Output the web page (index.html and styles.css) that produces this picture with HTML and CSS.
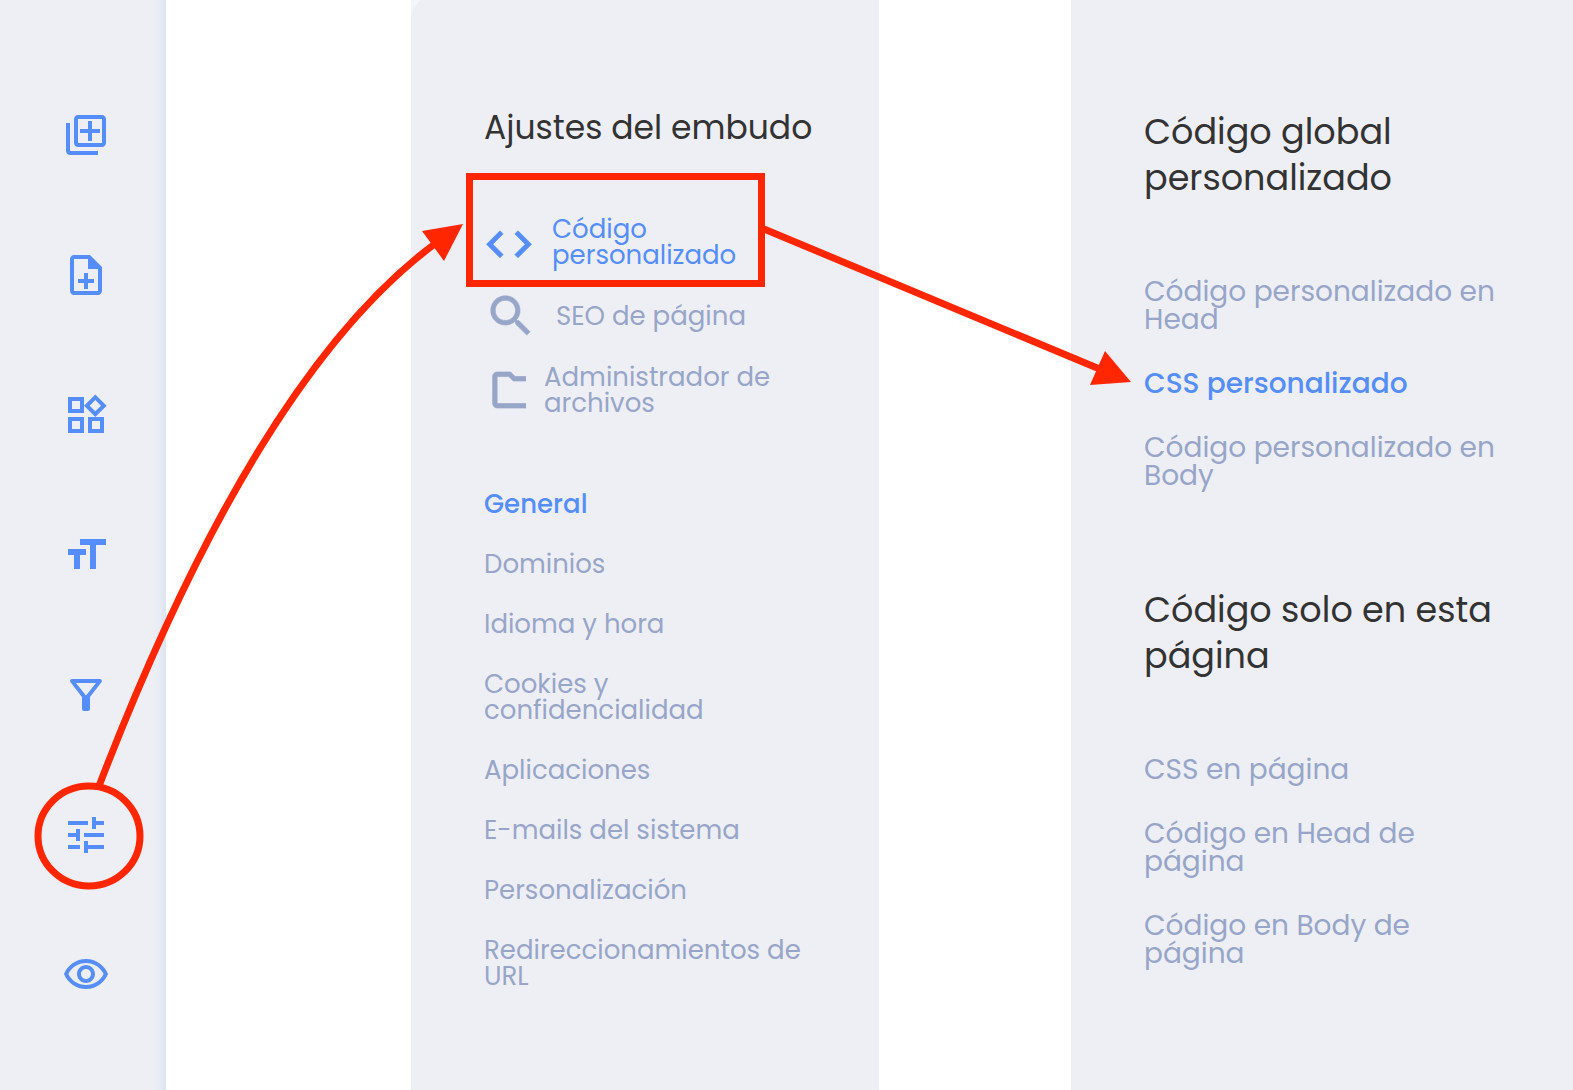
FILE: index.html
```html
<!DOCTYPE html>
<html lang="es">

<head>
  <meta charset="UTF-8" />
  <meta name="viewport" content="width=device-width, initial-scale=1.0" />
  <title>Ajustes del embudo</title>
  <link rel="stylesheet" href="styles.css">
</head>

<body>
  <div class="editor">
    <nav class="toolbar" aria-label="Herramientas">
      <button class="tool" aria-label="Añadir sección">
        <svg viewBox="0 0 24 24"><path d="M4 6H2v14c0 1.1.9 2 2 2h14v-2H4V6zm16-4H8c-1.1 0-2 .9-2 2v12c0 1.1.9 2 2 2h12c1.1 0 2-.9 2-2V4c0-1.1-.9-2-2-2zm0 14H8V4h12v12zm-7-1h2v-4h4V9h-4V5h-2v4H9v2h4v4z"/></svg>
      </button>
      <button class="tool" aria-label="Añadir página">
        <svg viewBox="0 0 24 24"><path d="M14 2H6c-1.1 0-2 .9-2 2v16c0 1.1.9 2 2 2h12c1.1 0 2-.9 2-2V8l-6-6zm4 18H6V4h7v5h5v11zm-5-9h-2v3H8v2h3v3h2v-3h3v-2h-3v-3z"/></svg>
      </button>
      <button class="tool" aria-label="Elementos">
        <svg viewBox="0 0 24 24"><path d="M16.66 4.52l2.83 2.83-2.83 2.83-2.83-2.83 2.83-2.83M9 5v4H5V5h4m10 10v4h-4v-4h4M9 15v4H5v-4h4m7.66-13.31L11 7.34 16.66 13l5.66-5.66-5.66-5.65zM11 3H3v8h8V3zm10 10h-8v8h8v-8zm-10 0H3v8h8v-8z"/></svg>
      </button>
      <button class="tool" aria-label="Tipografía">
        <svg viewBox="0 0 24 24"><path d="M9 4v3h5v12h3V7h5V4H9zm-6 8h3v7h3v-7h3V9H3v3z"/></svg>
      </button>
      <button class="tool" aria-label="Embudo">
        <svg viewBox="0 0 24 24"><path d="M7 6h10l-5.01 6.3L7 6zm-2.75-.39C6.27 8.2 10 13 10 13v6c0 .55.45 1 1 1h2c.55 0 1-.45 1-1v-6s3.72-4.8 5.74-7.39C20.25 4.95 19.78 4 18.95 4H5.04c-.83 0-1.3.95-.79 1.61z"/></svg>
      </button>
      <button class="tool" aria-label="Ajustes">
        <svg viewBox="0 0 24 24"><path d="M3 17v2h6v-2H3zM3 5v2h10V5H3zm10 16v-2h8v-2h-8v-2h-2v6h2zM7 9v2H3v2h4v2h2V9H7zm14 4v-2H11v2h10zm-6-4h2V7h4V5h-4V3h-2v6z"/></svg>
      </button>
      <button class="tool" aria-label="Vista previa">
        <svg viewBox="0 0 24 24"><path d="M12 6c3.79 0 7.17 2.13 8.82 5.5C19.17 14.87 15.79 17 12 17s-7.17-2.13-8.82-5.5C4.83 8.13 8.21 6 12 6m0-2C7 4 2.73 7.11 1 11.5 2.73 15.89 7 19 12 19s9.27-3.11 11-7.5C21.27 7.11 17 4 12 4zm0 5c1.38 0 2.5 1.12 2.5 2.5S13.38 14 12 14s-2.5-1.12-2.5-2.5S10.62 9 12 9m0-2c-2.48 0-4.5 2.02-4.5 4.5S9.52 16 12 16s4.5-2.02 4.5-4.5S14.48 7 12 7z"/></svg>
      </button>
    </nav>

    <section class="panel funnel-panel">
      <h2>Ajustes del embudo</h2>
      <ul class="shortcuts">
        <li>
          <a class="active" href="#codigo">
            <svg class="icon-code" viewBox="1 -1 22 24"><path d="M9.4 16.6L4.8 12l4.6-4.6L8 6l-6 6 6 6 1.4-1.4zm5.2 0l4.6-4.6-4.6-4.6L16 6l6 6-6 6-1.4-1.4z"/></svg>
            <span>Código personalizado</span>
          </a>
        </li>
        <li>
          <a href="#seo">
            <svg class="icon-search" viewBox="0 0 24 24"><path d="M15.5 14h-.79l-.28-.27C15.41 12.59 16 11.11 16 9.5 16 5.91 13.09 3 9.5 3S3 5.91 3 9.5 5.91 16 9.5 16c1.61 0 3.09-.59 4.23-1.57l.27.28v.79l5 4.99L20.49 19l-4.99-5zm-6 0C7.01 14 5 11.99 5 9.5S7.01 5 9.5 5 14 7.01 14 9.5 11.99 14 9.5 14z"/></svg>
            <span>SEO de página</span>
          </a>
        </li>
        <li>
          <a href="#archivos">
            <svg class="icon-folder" viewBox="-1.500 0 18 24"><path d="M20 6h-8l-2-2H4c-1.1 0-1.99.9-1.99 2L2 18c0 1.1.9 2 2 2h16V18H4V6h5.17l2 2H20z"/></svg>
            <span>Administrador de archivos</span>
          </a>
        </li>
      </ul>
      <ul class="links">
        <li><a class="active" href="#general">General</a></li>
        <li><a href="#dominios">Dominios</a></li>
        <li><a href="#idioma">Idioma y hora</a></li>
        <li><a href="#cookies">Cookies y confidencialidad</a></li>
        <li><a href="#aplicaciones">Aplicaciones</a></li>
        <li><a href="#emails">E-mails del sistema</a></li>
        <li><a href="#personalizacion">Personalización</a></li>
        <li><a href="#redirecciones">Redireccionamientos de URL</a></li>
      </ul>
    </section>

    <section class="panel code-panel">
      <h2>Código global personalizado</h2>
      <ul class="links">
        <li><a href="#head">Código personalizado en Head</a></li>
        <li><a class="active" href="#css">CSS personalizado</a></li>
        <li><a href="#body">Código personalizado en Body</a></li>
      </ul>
      <h2>Código solo en esta página</h2>
      <ul class="links">
        <li><a href="#css-pagina">CSS en página</a></li>
        <li><a href="#head-pagina">Código en Head de página</a></li>
        <li><a href="#body-pagina">Código en Body de página</a></li>
      </ul>
    </section>

    <!-- Step markers drawn over the panels -->
    <svg class="markers" viewBox="0 0 1573 1090" aria-hidden="true">
      <ellipse cx="89" cy="836" rx="51" ry="50"/>
      <path d="M99 786Q257 375 436 243"/>
      <rect x="469.500" y="176.500" width="292" height="107"/>
      <path d="M764 229L1102 370"/>
      <polygon points="463,224 422,231 444,261"/>
      <polygon points="1131,382 1105,351 1090,385"/>
    </svg>
  </div>
</body>

</html>
```
FILE: styles.css
```css
* {
  box-sizing: border-box;
  margin: 0;
  padding: 0;
}

:root {
  --panel-bg: #eeeff5;
  --blue: #558efa;
  --muted: #97a6c8;
  --heading: #333;
  --marker: #ff2600;
}

body {
  font-family: Poppins, Inter, sans-serif;
  background: #fff;
  color: var(--muted);
}

ul {
  list-style: none;
}

a {
  color: inherit;
  text-decoration: none;
}

a.active {
  color: var(--blue);
}

h2 {
  color: var(--heading);
  font-weight: 400;
}

.editor {
  position: relative;
  display: grid;
  grid-template-columns: 166px 245fr 468fr 192fr 502fr;
  min-height: 100vh;
}

.toolbar {
  display: flex;
  flex-direction: column;
  align-items: center;
  gap: 92px;
  padding: 111px 0 0 6px;
  background: linear-gradient(to left, #dbe4f2, #e8ecf5 6px, var(--panel-bg) 14px);
}

.tool {
  width: 48px;
  height: 48px;
  border: none;
  background: none;
  cursor: pointer;
}

.tool svg {
  display: block;
  width: 48px;
  height: 48px;
  fill: var(--blue);
}

.panel {
  background: var(--panel-bg);
}

.funnel-panel {
  grid-column: 3;
  padding: 106px 56px 0 73px;
  background: radial-gradient(circle at 28px 22px, transparent 28px, #f4f5f9 29px) 0 0 / 22px 22px no-repeat var(--panel-bg);
}

.funnel-panel h2 {
  font-size: 33px;
  line-height: 44px;
  margin-bottom: 65px;
}

.funnel-panel ul {
  font-size: 26px;
  line-height: 26px;
}

.shortcuts {
  display: flex;
  flex-direction: column;
  gap: 20px;
  margin-bottom: 74px;
}

.shortcuts a {
  display: flex;
  align-items: center;
  gap: 18px;
}

.shortcuts svg {
  flex: none;
  height: 54px;
  fill: currentColor;
  stroke: currentColor;
  stroke-width: 0.3;
}

.icon-code {
  width: 50px;
}

.icon-search {
  width: 54px;
}

.icon-folder {
  width: 42px;
}

.links {
  display: flex;
  flex-direction: column;
  gap: 34px;
}

.links .active {
  font-weight: 500;
}

.code-panel {
  grid-column: 5;
  padding: 109px 72px 0 73px;
}

.code-panel h2 {
  font-size: 35px;
  line-height: 46px;
  margin-bottom: 77px;
}

.code-panel .links {
  font-size: 28px;
  line-height: 28px;
  gap: 36px;
  margin-bottom: 97px;
}

.markers {
  position: absolute;
  top: 0;
  left: 0;
  width: 100%;
  pointer-events: none;
  fill: none;
  stroke: var(--marker);
  stroke-width: 7px;
}

.markers polygon {
  fill: var(--marker);
  stroke: none;
}
```
